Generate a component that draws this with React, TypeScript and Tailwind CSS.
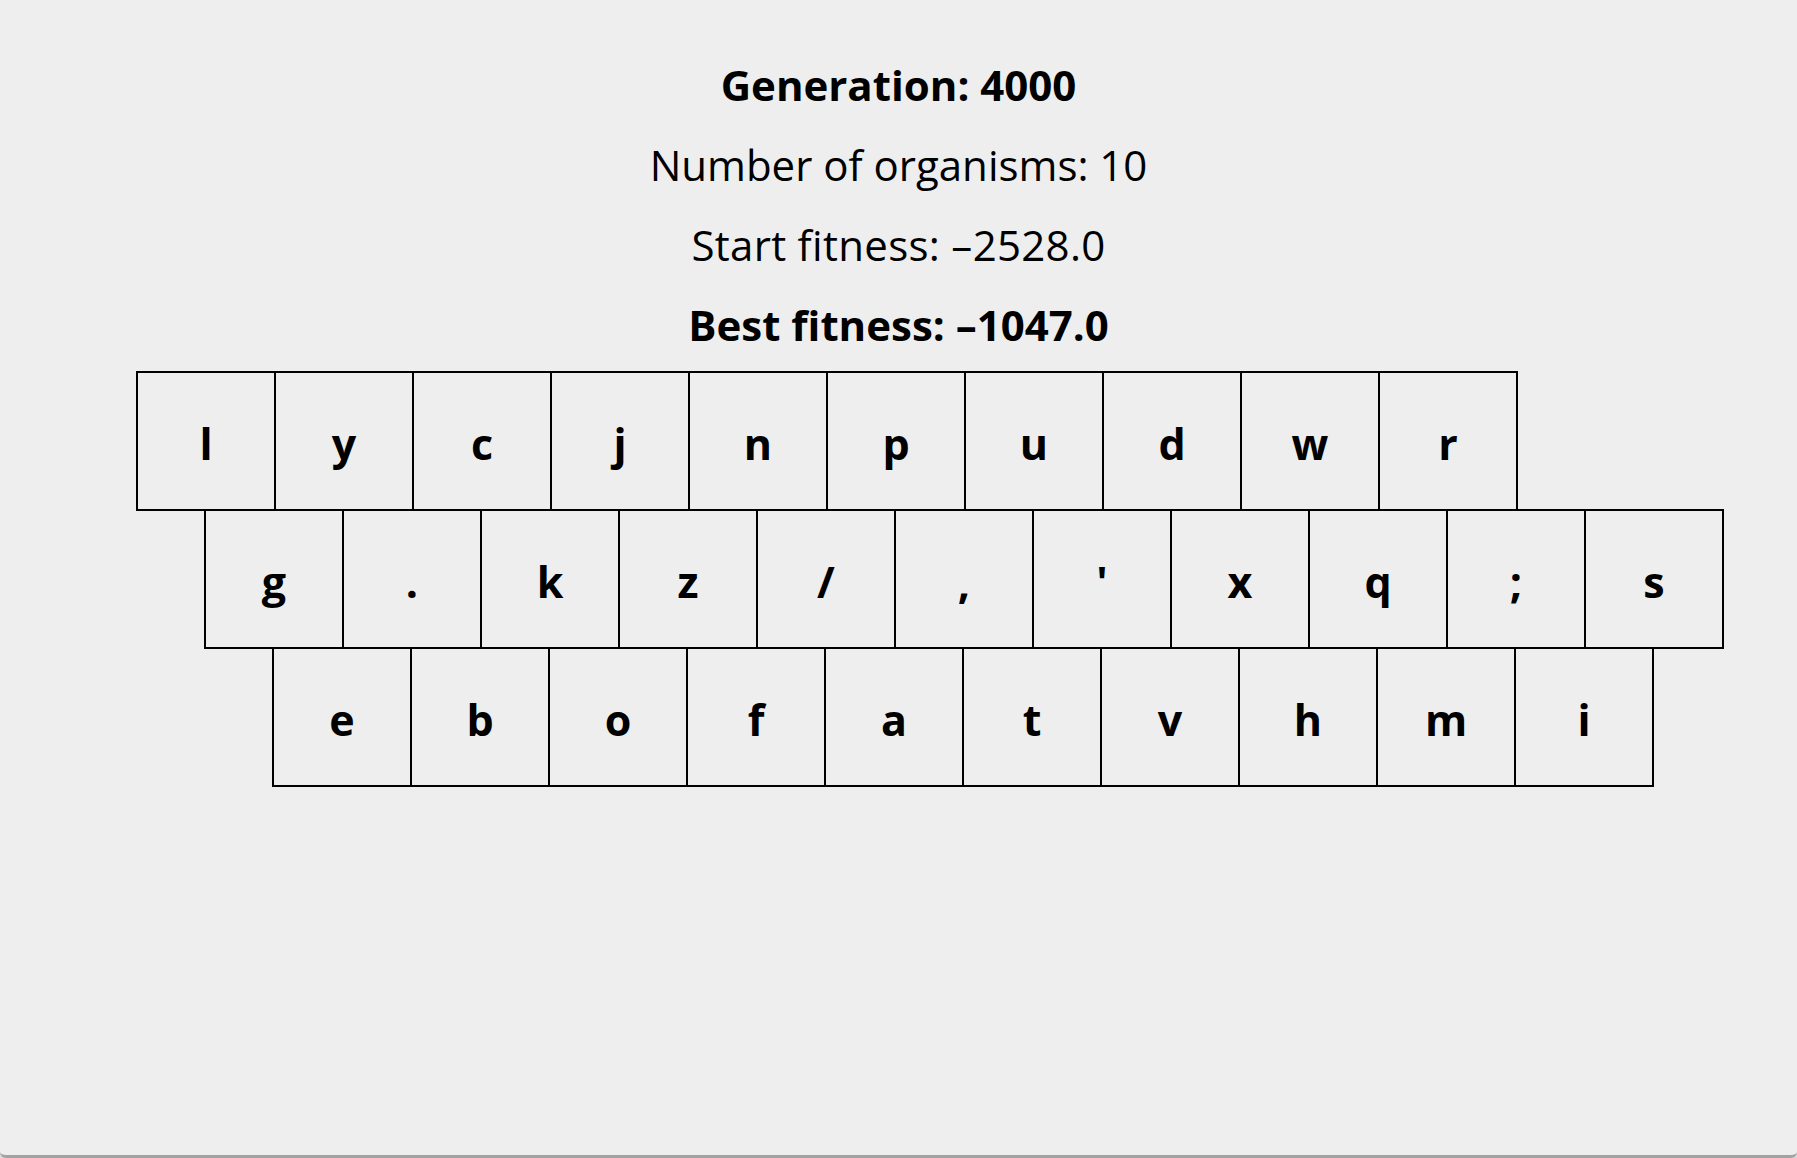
const rows: { keys: string[]; indent: string }[] = [
  { keys: ["l", "y", "c", "j", "n", "p", "u", "d", "w", "r"], indent: "ml-[136px]" },
  { keys: ["g", ".", "k", "z", "/", ",", "'", "x", "q", ";", "s"], indent: "ml-[204px]" },
  { keys: ["e", "b", "o", "f", "a", "t", "v", "h", "m", "i"], indent: "ml-[272px]" },
];

const Key = ({ label }: { label: string }) => (
  <div className="w-[140px] h-[140px] -mr-[2px] shrink-0 border-2 border-black flex items-center justify-center pt-[5px]">
    <span className="text-[43px] font-bold leading-none text-black">{label}</span>
  </div>
);

export default function App() {
  return (
    <div className="w-[1797px] h-[1158px] bg-[#dcdcdc]">
      <div
        className="h-full bg-[#eeeeee] rounded-b-[6px] border-b-[3px] border-[#a3a3a3] pt-[45px] text-black"
        style={{ fontFamily: '"Open Sans", "Noto Sans", sans-serif' }}
      >
        {/* Stats */}
        <div className="flex flex-col items-center text-[42px] leading-[80px]">
          <div className="font-bold">Generation: 4000</div>
          <div>Number of organisms: 10</div>
          <div className="tracking-[0.3px]">Start fitness: –2528.0</div>
          <div className="font-bold">Best fitness: –1047.0</div>
        </div>

        {/* Keyboard layout */}
        <div className="mt-[6px] flex flex-col">
          {rows.map((row, i) => (
            <div key={i} className={`flex -mb-[2px] ${row.indent}`}>
              {row.keys.map((k) => (
                <Key key={k} label={k} />
              ))}
            </div>
          ))}
        </div>
      </div>
    </div>
  );
}
